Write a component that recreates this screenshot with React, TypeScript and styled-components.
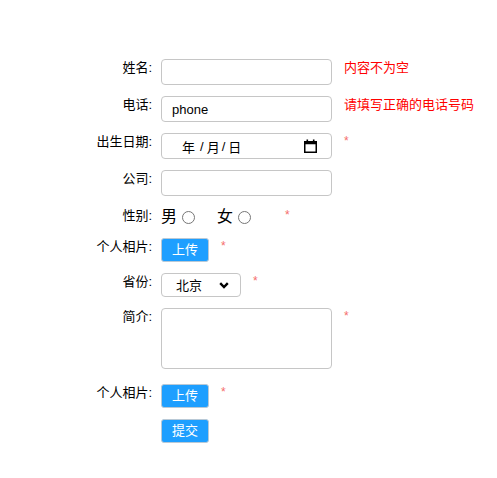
import React from "react";
import styled, { createGlobalStyle } from "styled-components";

const Global = createGlobalStyle`
  body {
    margin: 8px;
    background: #fff;
    font-family: "Liberation Sans", "Noto Sans CJK SC", sans-serif;
    font-size: 13px;
    color: #000;
  }
`;

const Form = styled.form`
  display: flex;
  flex-direction: column;
  padding-top: 51px;
`;

const Row = styled.div<{ $gap?: number }>`
  display: flex;
  align-items: flex-start;
  margin-bottom: ${(p) => p.$gap ?? 11}px;
`;

const Label = styled.label`
  width: 144px;
  margin-right: 9px;
  text-align: right;
  font-size: 13px;
  line-height: 18px;
`;

const Spacer = styled.div`
  width: 153px;
`;

const TextInput = styled.input`
  box-sizing: border-box;
  width: 171px;
  height: 26px;
  border: 1px solid #c6c6c6;
  border-radius: 4px;
  padding: 0 10px;
  font-family: "Liberation Sans", "Noto Sans CJK SC", sans-serif;
  font-size: 13px;
  color: #000;
  outline: none;
`;

const DateBox = styled.div`
  box-sizing: border-box;
  width: 171px;
  height: 26px;
  border: 1px solid #c6c6c6;
  border-radius: 4px;
  padding: 0 14px 0 20px;
  display: flex;
  align-items: center;
  justify-content: space-between;
  font-size: 13px;
`;

const DateText = styled.span`
  display: flex;
  align-items: center;
  font-family: "Liberation Sans", "Noto Sans CJK SC", sans-serif;
`;

const DatePart = styled.span`
  width: 13px;
`;

const DateSep = styled.span<{ $left: number }>`
  margin: 0 3px 0 ${(p) => p.$left}px;
`;

const TextArea = styled.textarea`
  box-sizing: border-box;
  width: 171px;
  height: 61px;
  border: 1px solid #c6c6c6;
  border-radius: 4px;
  resize: none;
  outline: none;
  margin: 0;
`;

const Hint = styled.span`
  margin-left: 12px;
  color: #ff0000;
  font-size: 13px;
  line-height: 18px;
`;

const Star = styled.span`
  margin-left: 12px;
  color: #f56c6c;
  font-size: 12px;
  line-height: 16px;
`;

const GenderGroup = styled.div`
  display: flex;
  align-items: center;
  height: 20px;
`;

const GenderOption = styled.label`
  display: flex;
  align-items: center;
  font-size: 16px;
  line-height: 20px;
  margin-right: 19px;
`;

const Radio = styled.input`
  appearance: none;
  box-sizing: border-box;
  width: 13px;
  height: 13px;
  margin: 0 3px 0 5px;
  border: 1px solid #767676;
  border-radius: 50%;
  background: #fff;
`;

const Button = styled.button`
  box-sizing: border-box;
  width: 48px;
  height: 24px;
  padding: 0;
  border: 1px solid #b9c9d6;
  border-radius: 3px;
  background: #1e9fff;
  color: #fff;
  font-family: "Liberation Sans", "Noto Sans CJK SC", sans-serif;
  font-size: 13px;
  line-height: 22px;
`;

const SelectWrap = styled.div`
  position: relative;
  width: 80px;
  height: 24px;
`;

const Select = styled.select`
  appearance: none;
  box-sizing: border-box;
  width: 80px;
  height: 24px;
  border: 1px solid #c6c6c6;
  border-radius: 4px;
  background: #fff;
  padding: 0 0 0 14px;
  font-family: "Liberation Sans", "Noto Sans CJK SC", sans-serif;
  font-size: 13px;
  color: #000;
  outline: none;
`;

const Chevron = styled.svg`
  position: absolute;
  right: 12px;
  top: 9px;
  pointer-events: none;
`;

const CalendarIcon = () => (
  <svg width="13" height="14" viewBox="0 0 13 14">
    <rect x="0.75" y="2.75" width="11.5" height="10.5" fill="none" stroke="#000" strokeWidth="1.5" />
    <rect x="0.75" y="2.75" width="11.5" height="2.5" fill="#000" />
    <rect x="2.5" y="0.5" width="1.6" height="3" fill="#000" />
    <rect x="8.9" y="0.5" width="1.6" height="3" fill="#000" />
  </svg>
);

export default function App() {
  return (
    <>
      <Global />
      <Form onSubmit={(e) => e.preventDefault()}>
        <Row>
          <Label>姓名:</Label>
          <TextInput />
          <Hint>内容不为空</Hint>
        </Row>
        <Row>
          <Label>电话:</Label>
          <TextInput defaultValue="phone" />
          <Hint>请填写正确的电话号码</Hint>
        </Row>
        <Row>
          <Label>出生日期:</Label>
          <DateBox>
            <DateText>
              <DatePart>年</DatePart>
              <DateSep $left={5}>/</DateSep>
              <DatePart>月</DatePart>
              <DateSep $left={2}>/</DateSep>
              <DatePart>日</DatePart>
            </DateText>
            <CalendarIcon />
          </DateBox>
          <Star>*</Star>
        </Row>
        <Row>
          <Label>公司:</Label>
          <TextInput />
        </Row>
        <Row>
          <Label>性别:</Label>
          <GenderGroup>
            <GenderOption>
              男<Radio type="radio" name="sex" />
            </GenderOption>
            <GenderOption>
              女<Radio type="radio" name="sex" />
            </GenderOption>
          </GenderGroup>
          <Star>*</Star>
        </Row>
        <Row>
          <Label>个人相片:</Label>
          <Button type="button">上传</Button>
          <Star>*</Star>
        </Row>
        <Row>
          <Label>省份:</Label>
          <SelectWrap>
            <Select defaultValue="北京">
              <option>北京</option>
              <option>上海</option>
            </Select>
            <Chevron width="10" height="7" viewBox="0 0 10 7">
              <path d="M1.2 1.2 L5 5 L8.8 1.2" fill="none" stroke="#000" strokeWidth="2.4" />
            </Chevron>
          </SelectWrap>
          <Star>*</Star>
        </Row>
        <Row $gap={15}>
          <Label>简介:</Label>
          <TextArea />
          <Star>*</Star>
        </Row>
        <Row>
          <Label>个人相片:</Label>
          <Button type="button">上传</Button>
          <Star>*</Star>
        </Row>
        <Row>
          <Spacer />
          <Button type="submit">提交</Button>
        </Row>
      </Form>
    </>
  );
}
